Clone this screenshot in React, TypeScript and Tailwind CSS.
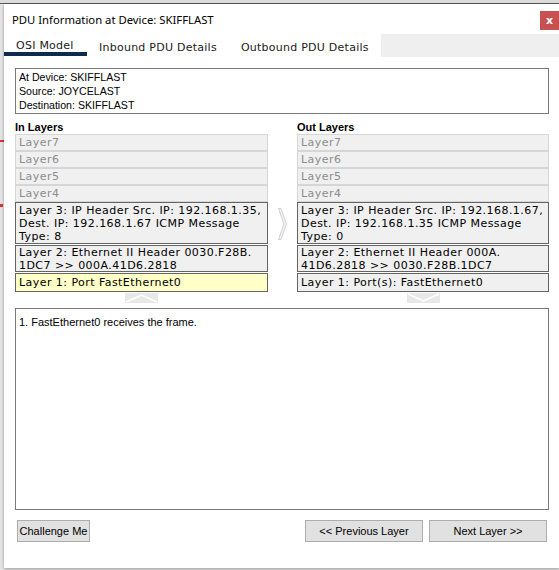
import * as React from 'react';

const inactive = ['Layer7', 'Layer6', 'Layer5', 'Layer4'];

function Layer({ text, active, hl }: { text: React.ReactNode; active?: boolean; hl?: boolean }) {
  if (!active) {
    return (
      <div className="h-[17px] border border-[#d6d6d6] bg-[#f0f0f0] px-[3px] text-[#8c8c8c] leading-[15px]">
        {text}
      </div>
    );
  }
  return (
    <div
      className={
        'border border-[#646464] px-[3px] leading-[13px] text-black ' +
        (hl ? 'bg-[#ffffc8]' : 'bg-[#f0f0f0]')
      }
    >
      {text}
    </div>
  );
}

function Column({ title, l3, l2, l1, hl, down }: { title: string; l3: string; l2: string; l1: string; hl?: boolean; down?: boolean }) {
  return (
    <div className="flex flex-col">
      <div className="h-[14px] font-['Liberation_Sans',sans-serif] text-[11px] font-bold leading-[14px] text-black">{title}</div>
      <div className="flex flex-col font-['DejaVu_Sans',sans-serif] text-[11px] tracking-[0.45px]">
        {inactive.map((l) => (
          <Layer key={l} text={l} />
        ))}
        <Layer active text={<span className="block h-[40px] pt-[1px]">{l3}</span>} />
        <div className="mt-[1px]">
          <Layer active text={<span className="block h-[25px]">{l2}</span>} />
        </div>
        <div className="mt-[1px]">
          <Layer active hl={hl} text={<span className="block h-[17px] leading-[17px]">{l1}</span>} />
        </div>
      </div>
      <div className="mt-[1px] flex justify-center">
        <svg width="33" height="10" viewBox="0 0 33 10">
          <rect x="0" y="0" width="33" height="10" fill="#e8e8e8" />
          {down ? (
            <polyline points="1,1 16.5,8 32,1" fill="none" stroke="#ffffff" strokeWidth="1.5" />
          ) : (
            <polyline points="1,9 16.5,2 32,9" fill="none" stroke="#ffffff" strokeWidth="1.5" />
          )}
        </svg>
      </div>
    </div>
  );
}

function Btn({ children, w }: { children: React.ReactNode; w: string }) {
  return (
    <button className={'h-[22px] border border-[#adadad] bg-[#e1e1e1] text-[11px] text-black leading-[20px] ' + w}>
      {children}
    </button>
  );
}

export default function App() {
  return (
    <div className="h-[570px] w-[559px] overflow-hidden bg-[#e6e6e6] font-['Liberation_Sans',sans-serif]">
      <div className="h-[4px] border-b border-[#5a5a5a] bg-[#dcdcdc]" />
      <div className="flex">
        <div className="flex w-[4px] flex-col bg-[#e4e4e4]">
          <div className="mt-[136px] h-[2px] bg-[#e03030]" />
          <div className="mt-[62px] h-[3px] w-[3px] bg-[#e03030]" />
        </div>
        <div className="flex h-[564px] w-[555px] flex-col bg-white shadow-[0_1px_3px_rgba(0,0,0,0.35)]">
          {/* title bar */}
          <div className="flex h-[30px] items-start justify-between">
            <div className="pl-[8px] pt-[7px] font-['Noto_Sans',sans-serif] text-[11.3px] leading-[17px] text-black">
              PDU Information at Device: SKIFFLAST
            </div>
            <div className="mt-[7px] flex h-[19px] w-[19px] items-center justify-center bg-[#c75050] font-['DejaVu_Sans',sans-serif] text-[11px] font-bold leading-none text-white">
              x
            </div>
          </div>

          {/* tabs */}
          <div className="flex h-[23px] items-start font-['DejaVu_Sans',sans-serif] text-[11px] tracking-[0.25px] text-[#1a1a1a]">
            <div className="flex h-[22px] w-[83px] items-center border-b-[4px] border-[#0e2a4c] pl-[12px] pt-[6px]">OSI Model</div>
            <div className="flex h-[22px] items-center px-[12px] pt-[6px]">Inbound PDU Details</div>
            <div className="flex h-[22px] items-center px-[12px] pt-[6px]">Outbound PDU Details</div>
            <div className="h-[23px] flex-1 bg-[#efefef]" />
          </div>

          <div className="ml-[11px] mt-[11px] flex w-[534px] flex-col">
            {/* info */}
            <div className="h-[46px] border border-[#7a7a7a] px-[3px] pt-[1px] text-[10.6px] leading-[14px] text-black">
              <div>At Device: SKIFFLAST</div>
              <div>Source: JOYCELAST</div>
              <div>Destination: SKIFFLAST</div>
            </div>

            {/* layers */}
            <div className="mt-[6px] grid grid-cols-[253px_29px_252px]">
              <Column
                title="In Layers"
                l3="Layer 3: IP Header Src. IP: 192.168.1.35, Dest. IP: 192.168.1.67 ICMP Message Type: 8"
                l2="Layer 2: Ethernet II Header 0030.F28B. 1DC7 >> 000A.41D6.2818"
                l1="Layer 1: Port FastEthernet0"
                hl
              />
              <div className="flex justify-center pt-[88px] pl-[1px]">
                <svg width="10" height="32" viewBox="0 0 10 32">
                  <polygon points="0.5,0.5 3,0.5 8.5,16 3,31.5 0.5,31.5 6,16" fill="#f4f4f4" stroke="#cfcfcf" strokeWidth="1" />
                </svg>
              </div>
              <Column
                title="Out Layers"
                l3="Layer 3: IP Header Src. IP: 192.168.1.67, Dest. IP: 192.168.1.35 ICMP Message Type: 0"
                l2="Layer 2: Ethernet II Header 000A. 41D6.2818 >> 0030.F28B.1DC7"
                l1="Layer 1: Port(s): FastEthernet0"
                down
              />
            </div>

            {/* description */}
            <div className="mt-[5px] h-[202px] border border-[#7a7a7a] px-[3px] pt-[6px] text-[11px] leading-[14px] text-black">
              1. FastEthernet0 receives the frame.
            </div>

            {/* buttons */}
            <div className="mt-[10px] flex items-center pl-[2px]">
              <Btn w="w-[73px]">Challenge Me</Btn>
              <div className="flex-1" />
              <Btn w="w-[118px]">&lt;&lt; Previous Layer</Btn>
              <div className="w-[6px]" />
              <Btn w="w-[118px]">Next Layer &gt;&gt;</Btn>
              <div className="w-[2px]" />
            </div>
          </div>
        </div>
      </div>
    </div>
  );
}
